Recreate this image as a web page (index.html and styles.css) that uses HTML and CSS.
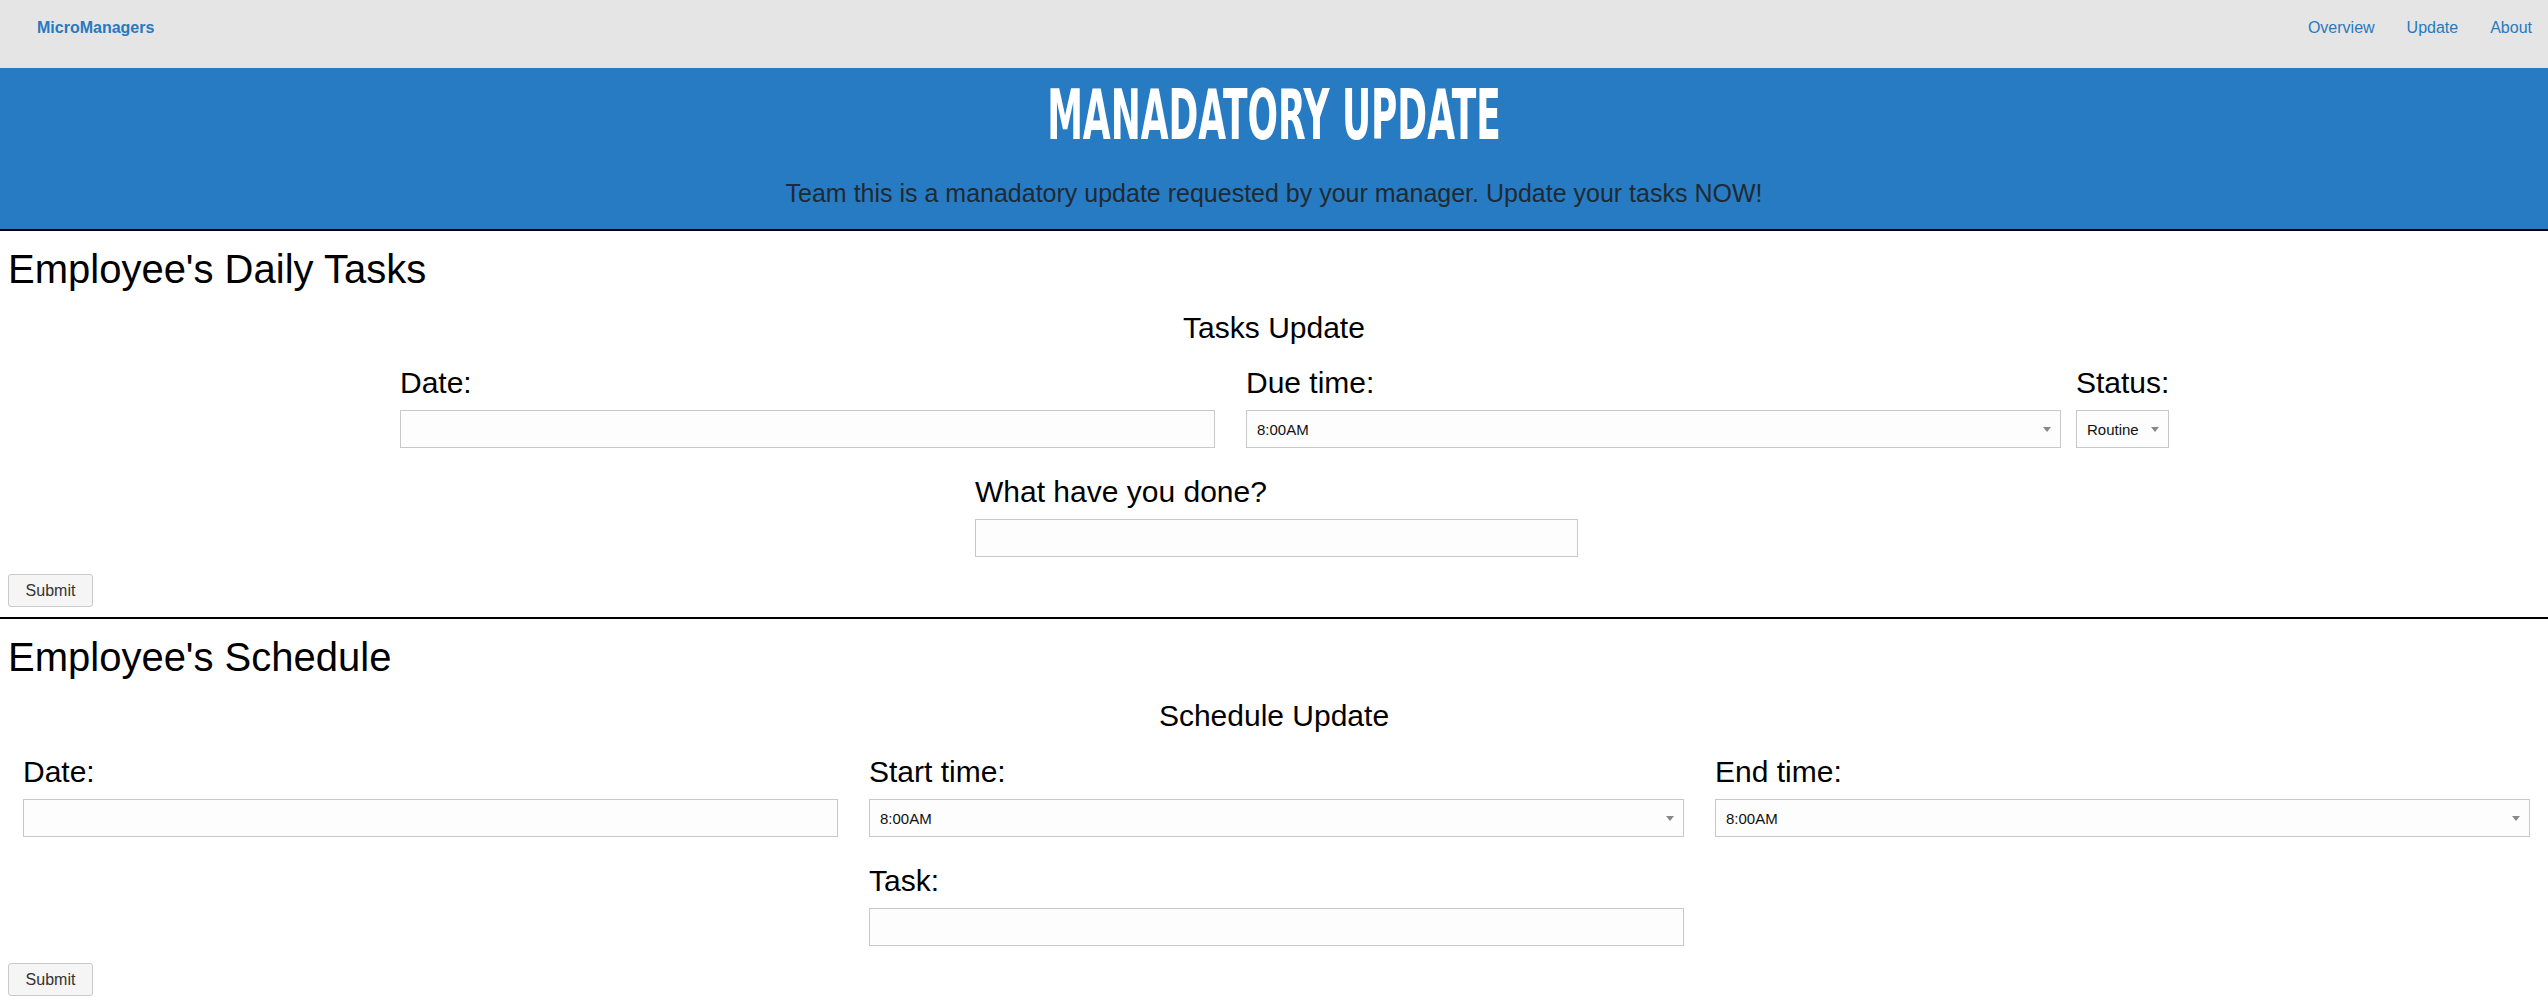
FILE: index.html
```html
<!DOCTYPE html>
<html lang="en">
<head>
<meta charset="utf-8">
<title>MicroManagers - Update</title>
<link rel="stylesheet" href="styles.css">
</head>
<body>
<nav class="topnav">
  <a class="brand" href="#">MicroManagers</a>
  <ul class="links">
    <li><a href="#">Overview</a></li>
    <li><a href="#">Update</a></li>
    <li><a href="#">About</a></li>
  </ul>
</nav>

<header class="hero">
  <h1 class="hero-title"><span>Manadatory Update</span></h1>
  <p class="hero-sub">Team this is a manadatory update requested by your manager. Update your tasks NOW!</p>
</header>

<section class="panel">
  <h2 class="panel-title">Employee's Daily Tasks</h2>
  <h3 class="form-title">Tasks Update</h3>
  <form class="task-form">
    <div class="row-tasks">
      <div class="field field-wide">
        <label class="lbl">Date:</label>
        <input class="ctl" type="text">
      </div>
      <div class="field field-wide field-due">
        <label class="lbl">Due time:</label>
        <div class="sel"><select class="ctl"><option>8:00AM</option></select></div>
      </div>
      <div class="field field-status">
        <label class="lbl">Status:</label>
        <div class="sel"><select class="ctl ctl-small"><option>Routine</option></select></div>
      </div>
    </div>
    <div class="field field-done">
      <label class="lbl">What have you done?</label>
      <input class="ctl" type="text">
    </div>
    <button class="btn" type="button">Submit</button>
  </form>
</section>

<section class="panel panel-last">
  <h2 class="panel-title">Employee's Schedule</h2>
  <h3 class="form-title">Schedule Update</h3>
  <form class="task-form">
    <div class="grid3">
      <div class="field">
        <label class="lbl">Date:</label>
        <input class="ctl" type="text">
      </div>
      <div class="field">
        <label class="lbl">Start time:</label>
        <div class="sel"><select class="ctl"><option>8:00AM</option></select></div>
      </div>
      <div class="field">
        <label class="lbl">End time:</label>
        <div class="sel"><select class="ctl"><option>8:00AM</option></select></div>
      </div>
      <div class="field field-task">
        <label class="lbl">Task:</label>
        <input class="ctl" type="text">
      </div>
    </div>
    <button class="btn" type="button">Submit</button>
  </form>
</section>
</body>
</html>
```

FILE: styles.css
```css
* { box-sizing: border-box; }

html, body {
  margin: 0;
  padding: 0;
  background: #ffffff;
  font-family: "Liberation Sans", Arial, sans-serif;
  color: #000;
}

a { text-decoration: none; }

/* top navigation */
.topnav {
  height: 68px;
  background: #e5e5e5;
  display: flex;
  align-items: flex-start;
  justify-content: space-between;
  padding: 18px 0 0 37px;
}
.brand {
  font-size: 16px;
  line-height: 20px;
  font-weight: bold;
  color: #2779c0;
}
.links {
  list-style: none;
  margin: 0;
  padding: 0;
  display: flex;
}
.links a {
  display: block;
  font-size: 16px;
  line-height: 20px;
  padding: 0 16px;
  color: #2779c0;
}

/* hero */
.hero {
  background: #277bc2;
  border-bottom: 2px solid #000;
  padding: 12px 0 21px;
  text-align: center;
}
.hero-title {
  margin: 0;
  font-family: "Liberation Sans Narrow", "DejaVu Sans Condensed", "Liberation Sans", sans-serif;
  font-weight: bold;
  font-size: 70px;
  line-height: 70px;
  color: #ffffff;
  text-transform: uppercase;
}
.hero-title span {
  display: inline-block;
  transform: scaleX(0.57);
  transform-origin: center;
}
.hero-sub {
  margin: 29px 0 0;
  font-size: 25px;
  line-height: 29px;
  color: #1f2a33;
}

/* panels */
.panel {
  border-bottom: 2px solid #000;
  padding: 0 0 10px;
}
.panel-last {
  border-bottom: none;
}
.panel-title {
  margin: 15px 0 0 8px;
  font-size: 40px;
  line-height: 46px;
  font-weight: normal;
}
.panel-last .panel-title { margin-top: 15px; }

.form-title {
  margin: 19px 0 0;
  text-align: center;
  font-size: 30px;
  line-height: 34px;
  font-weight: normal;
}

.task-form {
  margin: 21px 0 0;
}
.panel-last .task-form { margin-top: 22px; }

.field {
  display: flex;
  flex-direction: column;
}
.lbl {
  display: block;
  font-size: 30px;
  line-height: 34px;
  margin-bottom: 10px;
}

.ctl {
  display: block;
  width: 100%;
  height: 38px;
  border: 1px solid #c8c8c8;
  border-radius: 0;
  background: #fdfdfd;
  font-family: "Liberation Sans", Arial, sans-serif;
  font-size: 15px;
  color: #111;
  padding: 0 10px;
  margin: 0;
  outline: none;
}
select.ctl {
  -webkit-appearance: none;
  appearance: none;
  padding-right: 28px;
}

.sel {
  position: relative;
}
.sel::after {
  content: "";
  position: absolute;
  right: 10px;
  top: 17px;
  width: 0;
  height: 0;
  border-left: 4px solid transparent;
  border-right: 4px solid transparent;
  border-top: 5px solid #888;
  pointer-events: none;
}

/* first form row */
.row-tasks {
  display: flex;
  padding-left: 400px;
}
.field-wide { width: 815px; }
.field-due { margin-left: 31px; }
.field-status { margin-left: 15px; width: 93px; }
.ctl-small { width: 93px; padding-right: 20px; }

.field-done {
  width: 603px;
  margin: 27px 0 0 975px;
}

/* second form grid */
.grid3 {
  display: grid;
  grid-template-columns: repeat(3, 1fr);
  column-gap: 31px;
  row-gap: 27px;
  padding: 0 18px 0 23px;
}
.field-task {
  grid-column: 2;
}

.btn {
  display: block;
  margin: 17px 0 0 8px;
  width: 85px;
  height: 33px;
  background: #f5f5f5;
  border: 1px solid #cacaca;
  border-radius: 3px;
  font-family: "Liberation Sans", Arial, sans-serif;
  font-size: 16px;
  color: #333;
  padding: 0;
}
.panel .task-form .btn { margin-top: 17px; }
```
